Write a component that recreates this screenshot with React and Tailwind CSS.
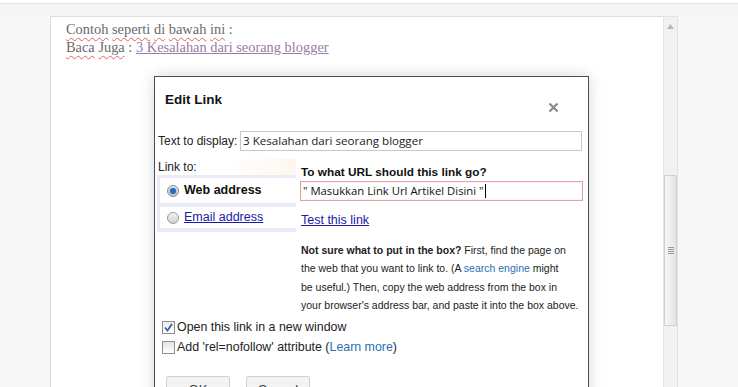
export default function App() {
  const sans = { fontFamily: '"Liberation Sans", Arial, sans-serif' };
  const wavy = "underline decoration-wavy decoration-[#e06060] decoration-1 underline-offset-[3px]";
  return (
    <div className="relative w-[738px] h-[387px] overflow-hidden bg-[#f7f7f7]">
      <div className="h-[4px] bg-white border-b border-[#e6e6e6]"></div>
      <div className="h-[12px] bg-[#f5f5f5]"></div>
      <div className="flex h-[371px]">
        <div className="w-[50px]"></div>
        <div className="w-[613px] bg-white border-l border-t border-[#dedede] pl-[15px] pt-[3px]">
          <div className="text-[14.4px] leading-[18px] text-[#6a6a6a]" style={{ fontFamily: '"Liberation Serif", "Times New Roman", serif' }}>
            <div>
              <span className={wavy}>Contoh</span> <span className={wavy}>seperti</span> <span className={wavy}>di</span> <span className={wavy}>bawah</span> <span className={wavy}>ini</span> :
            </div>
            <div>
              <span className={wavy}>Baca</span> <span className={wavy}>Juga</span> : <span className="underline text-[#9b7ba5] decoration-[#9b7ba5]">3 Kesalahan dari seorang blogger</span>
            </div>
          </div>
        </div>
        <div className="w-[15px] bg-[#f1f1f1] border-l border-r border-t border-[#e3e3e3] flex flex-col items-center">
          <svg width="7" height="5" viewBox="0 0 7 5" className="mt-[7px]"><path d="M0 5 L3.5 0 L7 5 Z" fill="#b8b8b8" /></svg>
          <div className="mt-[146px] w-[13px] h-[151px] rounded-[1px] border border-[#cfcfcf] bg-gradient-to-r from-[#f6f6f6] to-[#e4e4e4] flex flex-col items-center justify-center gap-[1px]">
            <div className="w-[6px] h-[1px] bg-[#9a9a9a]"></div>
            <div className="w-[6px] h-[1px] bg-[#9a9a9a]"></div>
            <div className="w-[6px] h-[1px] bg-[#9a9a9a]"></div>
            <div className="w-[6px] h-[1px] bg-[#9a9a9a]"></div>
          </div>
        </div>
      </div>

      <div className="absolute left-[154px] top-[76px] w-[435px] h-[330px] bg-white border border-[#45505b] shadow-[0_0_14px_rgba(0,0,0,0.16)] text-[#111]" style={sans}>
        <div className="h-[54px] flex justify-between pl-[10px] pr-[29px]">
          <div className="pt-[15px] text-[13.5px] font-bold leading-[16px]">Edit Link</div>
          <svg width="11" height="11" viewBox="0 0 11 11" className="mt-[25px]">
            <path d="M1.5 1.5 L9.5 9.5 M9.5 1.5 L1.5 9.5" stroke="#8a8a8a" strokeWidth="2.2" />
          </svg>
        </div>
        <div className="flex items-center pl-[3px] h-[20px]">
          <div className="w-[82px] text-[12px] text-[#222]">Text to display:</div>
          <div className="w-[342px] h-[20px] border border-[#c8c8c8] flex items-center pl-[2px] text-[11.6px] text-[#222]" style={{ fontFamily: '"Open Sans", sans-serif' }}>
            3 Kesalahan dari seorang blogger
          </div>
        </div>
        <div className="flex pl-[2px] mt-[8px]">
          <div className="w-[139px]">
            <div className="text-[12px] leading-[16px] text-[#222] pl-[1px] bg-gradient-to-r from-white via-white to-[#fdf6ef]">Link to:</div>
            <div className="bg-[#e9ebf7] pl-[3px] pt-[3px] pb-[4px] flex flex-col gap-[4px]">
              <div className="h-[25px] bg-white flex items-center pl-[7px]">
                <span className="w-[12px] h-[12px] rounded-full border border-[#8a8a8a] bg-gradient-to-b from-[#e8e8e8] to-[#c8c8c8] flex items-center justify-center">
                  <span className="w-[6px] h-[6px] rounded-full bg-[#1f6fb8] shadow-[0_0_2px_#6ab0f0]"></span>
                </span>
                <span className="ml-[5px] text-[12.5px] font-bold text-[#111]">Web address</span>
              </div>
              <div className="h-[21px] bg-white flex items-center pl-[7px]">
                <span className="w-[12px] h-[12px] rounded-full border border-[#9a9a9a] bg-gradient-to-b from-[#f4f4f4] to-[#d0d0d0]"></span>
                <span className="ml-[5px] text-[12.5px] text-[#1a1aa6] underline">Email address</span>
              </div>
            </div>
          </div>
          <div className="ml-[4px] w-[283px] pt-[6px]">
            <div className="pl-[1px] text-[11.8px] font-bold leading-[14px] text-[#111]">To what URL should this link go?</div>
            <div className="mt-[2px] h-[20px] border border-[#e2a4ab] shadow-[inset_0_0_2px_rgba(220,120,130,0.3)] flex items-center pl-[2px] text-[11.3px] text-[#111]" style={{ fontFamily: '"Open Sans", sans-serif' }}>
              " Masukkan Link Url Artikel Disini "<span className="ml-[1px] w-[1px] h-[14px] bg-black"></span>
            </div>
            <div className="mt-[12px] pl-[1px] text-[12.5px] leading-[14px] text-[#1a1aa6] underline">Test this link</div>
            <div className="mt-[14px] pl-[1px] text-[10.5px] leading-[18.3px] text-[#222]">
              <div><b>Not sure what to put in the box?</b> First, find the page on</div>
              <div>the web that you want to link to. (A <span className="text-[#2a6fb5]">search engine</span> might</div>
              <div>be useful.) Then, copy the web address from the box in</div>
              <div>your browser's address bar, and paste it into the box above.</div>
            </div>
          </div>
        </div>
        <div className="mt-[6px] pl-[7px] flex flex-col gap-[6px] text-[12.4px] text-[#222]">
          <div className="flex items-center h-[14px]">
            <span className="w-[13px] h-[13px] border border-[#8e8f8f] bg-gradient-to-b from-[#ececec] to-[#ffffff] flex items-center justify-center">
              <svg width="9" height="9" viewBox="0 0 9 9"><path d="M1 4.5 L3.5 7.5 L8 1" stroke="#3a5fa8" strokeWidth="1.8" fill="none" /></svg>
            </span>
            <span className="ml-[2px]">Open this link in a new window</span>
          </div>
          <div className="flex items-center h-[14px]">
            <span className="w-[13px] h-[13px] border border-[#8e8f8f] bg-gradient-to-b from-[#e4e4e4] to-[#ffffff]"></span>
            <span className="ml-[2px]">Add 'rel=nofollow' attribute (<span className="text-[#2a6fb5]">Learn more</span>)</span>
          </div>
        </div>
        <div className="mt-[22px] pl-[11px] flex gap-[16px]">
          <div className="w-[64px] h-[27px] border border-[#d0d0d0] rounded-[2px] bg-[#f3f3f3] flex items-center justify-center text-[13px] text-[#444]">OK</div>
          <div className="w-[64px] h-[27px] border border-[#d0d0d0] rounded-[2px] bg-[#f3f3f3] flex items-center justify-center text-[13px] text-[#444]">Cancel</div>
        </div>
      </div>
    </div>
  );
}
